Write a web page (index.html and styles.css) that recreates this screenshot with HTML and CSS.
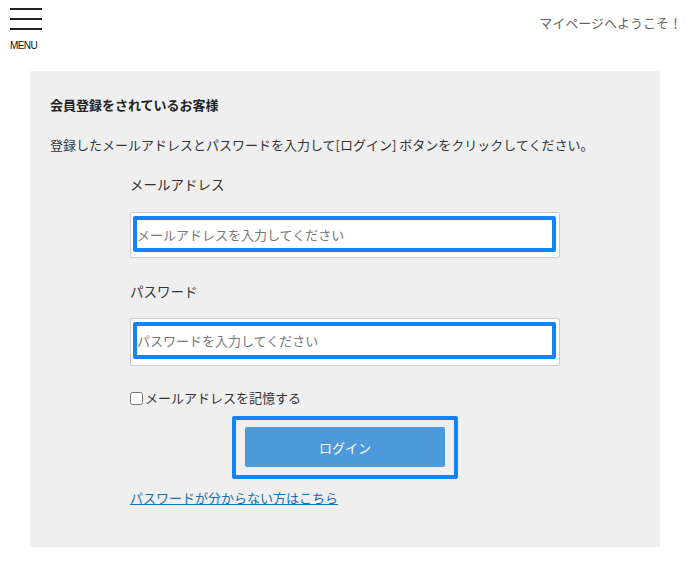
FILE: index.html
```html
<!DOCTYPE html>
<html lang="ja">
<head>
<meta charset="utf-8">
<title>ログイン</title>
<link rel="stylesheet" href="styles.css">
</head>
<body>
<header class="header">
  <div class="menu">
    <div class="burger"><span></span><span></span><span></span></div>
    <div class="menu-label">MENU</div>
  </div>
  <div class="welcome">マイページへようこそ！</div>
</header>
<main class="panel">
  <h2 class="panel-title">会員登録をされているお客様</h2>
  <p class="lead">登録したメールアドレスとパスワードを入力して[ログイン] ボタンをクリックしてください。</p>
  <form class="form">
    <label class="label" for="email">メールアドレス</label>
    <div class="field"><input id="email" class="input" type="text" placeholder="メールアドレスを入力してください"></div>
    <label class="label label-pw" for="pw">パスワード</label>
    <div class="field field-pw"><input id="pw" class="input" type="password" placeholder="パスワードを入力してください"></div>
    <label class="remember"><input type="checkbox" class="check">メールアドレスを記憶する</label>
    <div class="btn-wrap"><button type="button" class="btn">ログイン</button></div>
    <a class="forgot" href="#">パスワードが分からない方はこちら</a>
  </form>
</main>
</body>
</html>
```
FILE: styles.css
```css
* { box-sizing: border-box; }
html, body { margin: 0; padding: 0; background: #fff; }
body {
  font-family: "Noto Sans CJK JP", "Noto Sans", sans-serif;
  color: #333;
  font-size: 13px;
}
.header {
  height: 71px;
  display: flex;
  justify-content: space-between;
  align-items: flex-start;
}
.menu { padding: 8px 0 0 10px; }
.burger { display: flex; flex-direction: column; gap: 8px; width: 32px; }
.burger span { display: block; height: 2px; background: #222; }
.menu-label {
  margin-top: 10px;
  font-family: "Liberation Sans", Arial, sans-serif;
  font-size: 10px;
  letter-spacing: -0.6px;
  color: #111;
  line-height: 11px;
}
.welcome {
  padding: 13px 9px 0 0;
  color: #666;
  font-size: 13px;
  line-height: 20px;
}
.panel {
  margin: 0 31px 0 30px;
  background: #efefef;
  padding: 24px 20px 39px;
}
.panel-title {
  margin: 0;
  font-size: 13px;
  line-height: 20px;
  font-weight: bold;
  color: #222;
}
.lead {
  margin: 20px 0 0;
  line-height: 20px;
}
.form {
  width: 430px;
  margin: 0 0 0 80px;
  display: flex;
  flex-direction: column;
}
.label {
  margin-top: 19px;
  font-size: 13.5px;
  line-height: 20px;
}
.label-pw { margin-top: 23px; }
.field {
  margin-top: 18px;
  background: #fff;
  border: 1px solid #ccc;
  border-radius: 2px;
  padding: 3px 3px 5px 2px;
}
.field-pw { margin-top: 17px; padding-bottom: 6px; }
.input {
  display: block;
  width: 100%;
  height: 36px;
  border: 4px solid #1283fb;
  border-radius: 2px;
  padding: 0;
  font-family: inherit;
  font-size: 13px;
  color: #333;
  background: #fff;
  outline: none;
}
.field-pw .input { height: 37px; }
.input::placeholder { color: #777; }
.remember {
  margin-top: 22px;
  display: flex;
  align-items: center;
  font-size: 13px;
  line-height: 20px;
}
.check {
  margin: 0 2px 0 0;
  width: 13px;
  height: 13px;
}
.btn-wrap {
  margin: 8px auto 0;
  border: 4px solid #1283fb;
  border-radius: 2px;
  padding: 7px 9px 8px;
  width: 226px;
}
.btn {
  display: block;
  width: 200px;
  height: 40px;
  border: none;
  border-radius: 2px;
  background: #4d99db;
  color: #fff;
  font-family: inherit;
  font-size: 13px;
  cursor: pointer;
}
.forgot {
  margin-top: 9px;
  align-self: flex-start;
  color: #1470b4;
  text-decoration: underline;
  font-size: 13px;
  line-height: 20px;
}
```
